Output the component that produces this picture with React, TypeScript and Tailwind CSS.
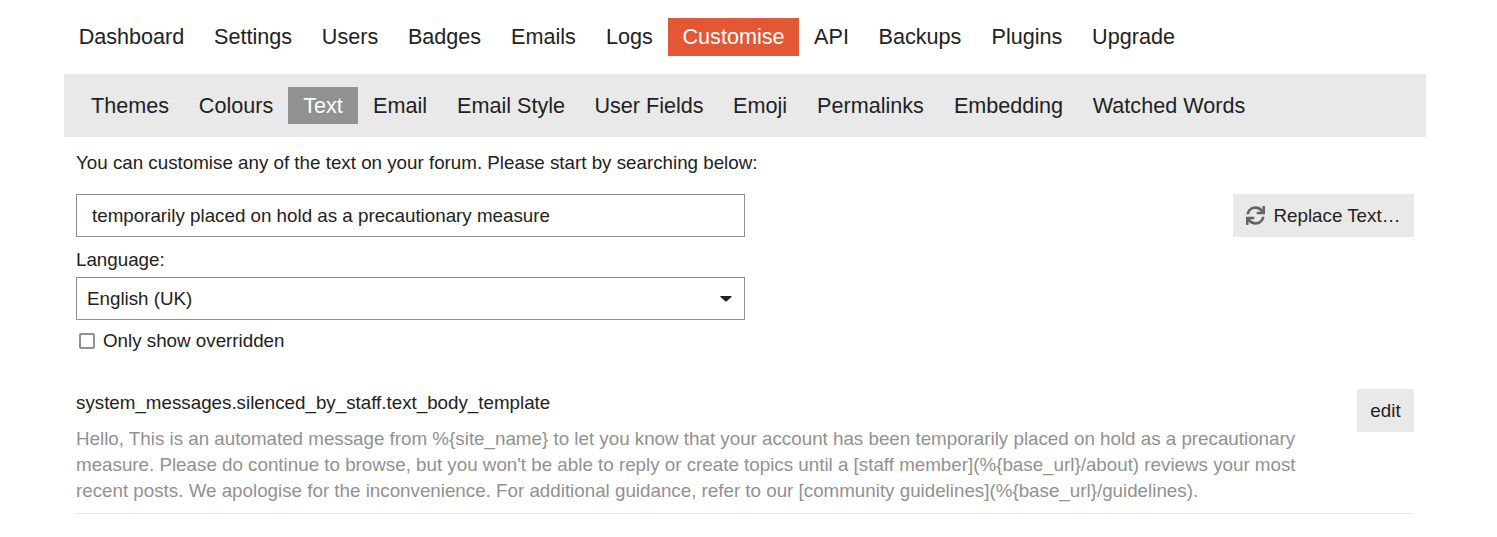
import { FaSync } from "react-icons/fa";

const main: [string, string][] = [
  ["Dashboard", "w-[135px]"], ["Settings", "w-[108px]"], ["Users", "w-[86px]"], ["Badges", "w-[103px]"], ["Emails", "w-[95px]"], ["Logs", "w-[77px]"], ["Customise", "w-[131px]"], ["API", "w-[65px]"], ["Backups", "w-[112px]"], ["Plugins", "w-[102px]"], ["Upgrade", "w-[111px]"],
];
const sub: [string, string][] = [
  ["Themes", "w-[108px]"], ["Colours", "w-[104px]"], ["Text", "w-[70px]"], ["Email", "w-[84px]"], ["Email Style", "w-[138px]"], ["User Fields", "w-[138px]"], ["Emoji", "w-[84px]"], ["Permalinks", "w-[137px]"], ["Embedding", "w-[139px]"], ["Watched Words", "w-[182px]"],
];

function Nav({ items, active, activeClass, itemClass }: { items: [string, string][]; active: string; activeClass: string; itemClass: string }) {
  return (
    <nav className="flex">
      {items.map(([label, width]) => (
        <a key={label} className={`flex shrink-0 items-center justify-center whitespace-nowrap text-[21.6px] ${itemClass} ${width} ${label === active ? activeClass : ""}`}>
          {label}
        </a>
      ))}
    </nav>
  );
}

export default function App() {
  return (
    <div className="h-[537px] bg-white font-['Liberation_Sans',Arial,sans-serif] text-[18.77px] leading-[26px] text-[#222]">
      <div className="ml-16 w-[1362px] pt-[18px]">
        <Nav items={main} active="Customise" activeClass="bg-[#e45735] text-white" itemClass="h-[38px]" />
        <div className="mt-[18px] h-[63px] bg-[#e9e9e9] pt-[13px] pl-3">
          <Nav items={sub} active="Text" activeClass="bg-[#919191] text-white" itemClass="h-[37px]" />
        </div>
        <main className="px-3 pt-[13px]">
          <p>You can customise any of the text on your forum. Please start by searching below:</p>
          <div className="mt-[18px] flex h-[43px] justify-between">
            <input className="w-[669px] border border-[#919191] px-[15px] outline-none" defaultValue="temporarily placed on hold as a precautionary measure" />
            <button className="flex w-[181px] items-center whitespace-nowrap bg-[#e9e9e9] pl-[13px]">
              <FaSync className="mr-[8.500px] size-[19px] shrink-0 text-[#646464]" />
              Replace Text…
            </button>
          </div>
          <div className="mt-[10px]">Language:</div>
          <button className="mt-1 flex h-[43px] w-[669px] items-center justify-between border border-[#919191] pr-3 pl-[10px]">
            English (UK)
            <svg viewBox="0 0 12 7" className="h-[7px] w-3 fill-[#222]"><path d="M.8 .9h10.400q1 .2.300 1L6.700 6.300q-.7.600-1.400 0L.5 1.900Q-.2 1.100.8.900z" /></svg>
          </button>
          <label className="mt-2 flex items-center">
            <input type="checkbox" className="mr-2 ml-[3px] size-4 appearance-none rounded-[2px] border-2 border-[#8f8f9d]" />
            Only show overridden
          </label>
          <section className="mt-[35px] flex h-[125px] justify-between border-b border-[#e9e9e9]">
            <div>
              <h2 className="pt-px">system_messages.silenced_by_staff.text_body_template</h2>
              <p className="mt-[10px] whitespace-nowrap text-[#919191]">
                Hello, This is an automated message from %{"{"}site_name{"}"} to let you know that your account has been temporarily placed on hold as a precautionary<br />
                measure. Please do continue to browse, but you won't be able to reply or create topics until a [staff member](%{"{"}base_url{"}"}/about) reviews your most<br />
                recent posts. We apologise for the inconvenience. For additional guidance, refer to our [community guidelines](%{"{"}base_url{"}"}/guidelines).
              </p>
            </div>
            <button className="h-[43px] w-[57px] bg-[#e9e9e9]">edit</button>
          </section>
        </main>
      </div>
    </div>
  );
}
